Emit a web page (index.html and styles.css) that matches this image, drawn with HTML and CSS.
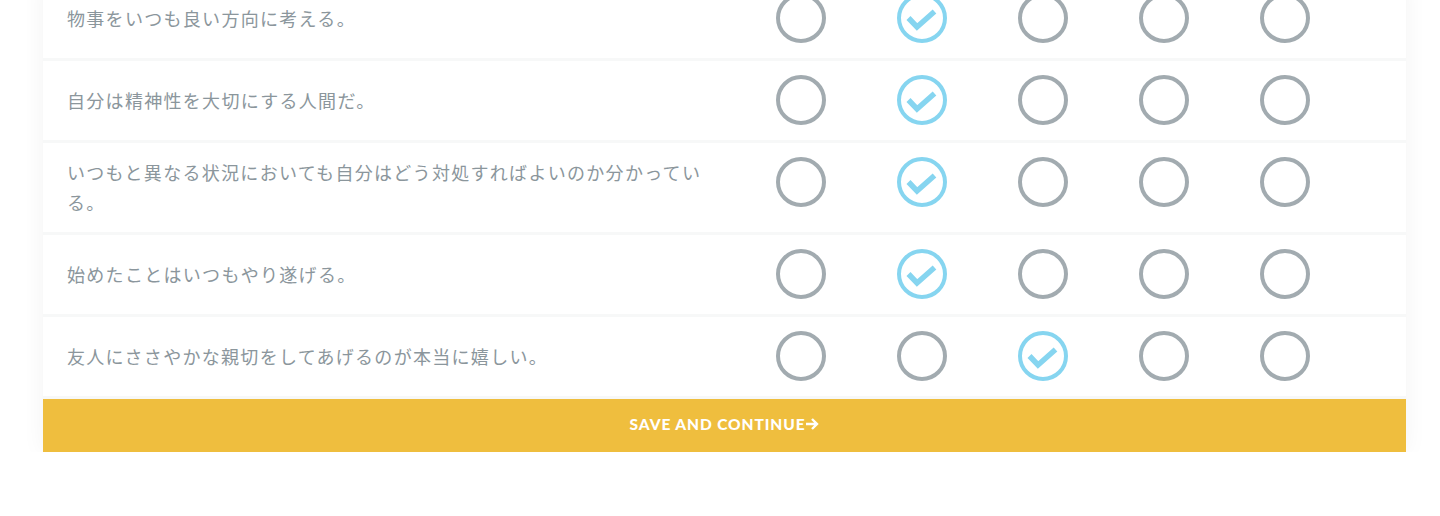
FILE: index.html
```html
<!DOCTYPE html>
<html lang="ja">

<head>
    <meta charset="UTF-8">
    <meta name="viewport" content="width=device-width, initial-scale=1.0">
    <title>Survey</title>
    <link rel="stylesheet" href="styles.css">
</head>

<body>
    <div class="survey">
        <div class="question">
            <p class="question_text">物事をいつも良い方向に考える。</p>
            <div class="options">
                <span class="option"><svg viewBox="0 0 50 50"><circle class="ring" cx="25" cy="25" r="23"/></svg></span>
                <span class="option checked"><svg viewBox="0 0 50 50"><circle class="ring" cx="25" cy="25" r="23"/><polyline class="tick" points="11.5,25 20,34 37.5,18.5"/></svg></span>
                <span class="option"><svg viewBox="0 0 50 50"><circle class="ring" cx="25" cy="25" r="23"/></svg></span>
                <span class="option"><svg viewBox="0 0 50 50"><circle class="ring" cx="25" cy="25" r="23"/></svg></span>
                <span class="option"><svg viewBox="0 0 50 50"><circle class="ring" cx="25" cy="25" r="23"/></svg></span>
            </div>
        </div>
        <div class="question">
            <p class="question_text">自分は精神性を大切にする人間だ。</p>
            <div class="options">
                <span class="option"><svg viewBox="0 0 50 50"><circle class="ring" cx="25" cy="25" r="23"/></svg></span>
                <span class="option checked"><svg viewBox="0 0 50 50"><circle class="ring" cx="25" cy="25" r="23"/><polyline class="tick" points="11.5,25 20,34 37.5,18.5"/></svg></span>
                <span class="option"><svg viewBox="0 0 50 50"><circle class="ring" cx="25" cy="25" r="23"/></svg></span>
                <span class="option"><svg viewBox="0 0 50 50"><circle class="ring" cx="25" cy="25" r="23"/></svg></span>
                <span class="option"><svg viewBox="0 0 50 50"><circle class="ring" cx="25" cy="25" r="23"/></svg></span>
            </div>
        </div>
        <div class="question">
            <p class="question_text">いつもと異なる状況においても自分はどう対処すればよいのか分かっている。</p>
            <div class="options">
                <span class="option"><svg viewBox="0 0 50 50"><circle class="ring" cx="25" cy="25" r="23"/></svg></span>
                <span class="option checked"><svg viewBox="0 0 50 50"><circle class="ring" cx="25" cy="25" r="23"/><polyline class="tick" points="11.5,25 20,34 37.5,18.5"/></svg></span>
                <span class="option"><svg viewBox="0 0 50 50"><circle class="ring" cx="25" cy="25" r="23"/></svg></span>
                <span class="option"><svg viewBox="0 0 50 50"><circle class="ring" cx="25" cy="25" r="23"/></svg></span>
                <span class="option"><svg viewBox="0 0 50 50"><circle class="ring" cx="25" cy="25" r="23"/></svg></span>
            </div>
        </div>
        <div class="question">
            <p class="question_text">始めたことはいつもやり遂げる。</p>
            <div class="options">
                <span class="option"><svg viewBox="0 0 50 50"><circle class="ring" cx="25" cy="25" r="23"/></svg></span>
                <span class="option checked"><svg viewBox="0 0 50 50"><circle class="ring" cx="25" cy="25" r="23"/><polyline class="tick" points="11.5,25 20,34 37.5,18.5"/></svg></span>
                <span class="option"><svg viewBox="0 0 50 50"><circle class="ring" cx="25" cy="25" r="23"/></svg></span>
                <span class="option"><svg viewBox="0 0 50 50"><circle class="ring" cx="25" cy="25" r="23"/></svg></span>
                <span class="option"><svg viewBox="0 0 50 50"><circle class="ring" cx="25" cy="25" r="23"/></svg></span>
            </div>
        </div>
        <div class="question">
            <p class="question_text">友人にささやかな親切をしてあげるのが本当に嬉しい。</p>
            <div class="options">
                <span class="option"><svg viewBox="0 0 50 50"><circle class="ring" cx="25" cy="25" r="23"/></svg></span>
                <span class="option"><svg viewBox="0 0 50 50"><circle class="ring" cx="25" cy="25" r="23"/></svg></span>
                <span class="option checked"><svg viewBox="0 0 50 50"><circle class="ring" cx="25" cy="25" r="23"/><polyline class="tick" points="11.5,25 20,34 37.5,18.5"/></svg></span>
                <span class="option"><svg viewBox="0 0 50 50"><circle class="ring" cx="25" cy="25" r="23"/></svg></span>
                <span class="option"><svg viewBox="0 0 50 50"><circle class="ring" cx="25" cy="25" r="23"/></svg></span>
            </div>
        </div>

        <a class="save_btn" href="javascript:;">
            SAVE AND CONTINUE<svg class="arrow" viewBox="0 0 14 14"><path d="M1 7H12M7 2L12 7L7 12"/></svg>
        </a>
    </div>
</body>

</html>
```

FILE: styles.css
```css
* {
    margin: 0px;
    padding: 0px;
}

body {
    background-color: #ffffff;
    font-family: "Noto Sans CJK JP", "Noto Sans", sans-serif;
}
/*
 * 问卷整体
 */

.survey {
    width: 1363px;
    margin: -21px 0 0 43px;
    background-color: #ffffff;
    box-shadow: 0 0 22px rgba(0, 0, 0, 0.05);
}
/*
 * 每一道题
 */

.question {
    display: flex;
    align-items: flex-start;
    padding: 14px 0 15px 24px;
    border-bottom: 3px solid #f7f8f8;
}

.question_text {
    flex: 0 0 646px;
    align-self: center;
    font-size: 18px;
    line-height: 30px;
    letter-spacing: 1.3px;
    color: #8b969c;
}
/*
 * 选项圆圈
 */

.options {
    display: flex;
    margin-left: 27px;
}

.option {
    display: flex;
    justify-content: center;
    width: 121px;
}

.option svg {
    width: 50px;
    height: 50px;
}

.ring {
    fill: none;
    stroke: #a2abb0;
    stroke-width: 4;
}

.checked .ring {
    stroke: #86d5f0;
}

.tick {
    fill: none;
    stroke: #86d5f0;
    stroke-width: 5.5;
}
/*
 * 底部按钮
 */

.save_btn {
    display: flex;
    justify-content: center;
    align-items: center;
    height: 50px;
    padding-bottom: 3px;
    background-color: #efbe3e;
    color: #ffffff;
    font-family: Lato, "Noto Sans", sans-serif;
    font-weight: 900;
    font-size: 15.5px;
    letter-spacing: 0.9px;
    text-decoration: none;
}

.arrow {
    width: 14px;
    height: 14px;
    margin-left: 0px;
    fill: none;
    stroke: #ffffff;
    stroke-width: 2.4;
}
```
